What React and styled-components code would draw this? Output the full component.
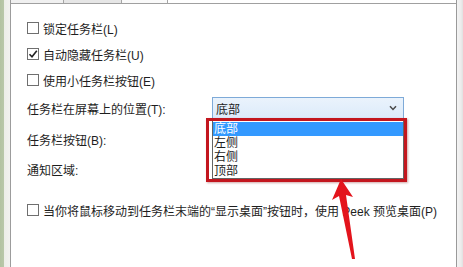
import React from 'react'
import styled, { createGlobalStyle } from 'styled-components'

const GlobalStyle = createGlobalStyle`
  html, body {
    margin: 0;
    padding: 0;
    background: #f0f0f0;
  }
  body {
    width: 463px;
    height: 267px;
    overflow: hidden;
    font-family: "Liberation Sans", "Noto Sans CJK SC", sans-serif;
    font-size: 12px;
    color: #1e1e1e;
  }
`

const Page = styled.div`
  position: relative;
  display: flex;
  width: 463px;
  height: 267px;
`

const LeftStrip = styled.div`
  width: 10px;
  background: linear-gradient(to right, #b3c3a2 0, #b9c8aa 4px, #eceee8 4px, #f2f2f0 10px);
  border-right: 1px solid #9c9c9c;
`

const Main = styled.div`
  flex: 1;
  display: flex;
  flex-direction: column;
`

const TabStrip = styled.div`
  display: flex;
  height: 3px;
  background: #f0f0f0;
  border-bottom: 1px solid #a0a0a0;
`

const Tab = styled.div`
  width: ${p => p.$w}px;
  flex: ${p => (p.$grow ? 1 : 'none')};
  border-right: ${p => (p.$edge ? '1px solid #a6a6a6' : 'none')};
  background: ${p => p.$bg || 'transparent'};
`

const Panel = styled.div`
  flex: 1;
  background: #fff;
  padding: 11px 0 0 16px;
`

const RightStrip = styled.div`
  width: 6px;
  border-left: 1px solid #9a9a9a;
  background: linear-gradient(to right, #f4f4f4 0, #ececec 4px, #e0e0e0 6px);
`

const Row = styled.div`
  display: flex;
  align-items: center;
  height: ${p => p.$h}px;
  white-space: nowrap;
`

const Box = styled.span`
  position: relative;
  width: 10px;
  height: 10px;
  border: 1px solid #6f6f6f;
  background: #fff;
  margin-right: 4px;
  flex: none;
`

const Label = styled.span`
  width: ${p => (p.$w ? `${p.$w}px` : 'auto')};
  flex: none;
`

const SelectWrap = styled.div`
  position: relative;
  width: 192px;
`

const Select = styled.div`
  display: flex;
  align-items: center;
  justify-content: space-between;
  height: 20px;
  padding: 0 6px 0 3px;
  border: 1px solid #7eaad8;
  background: linear-gradient(to bottom, #eaf3fc, #dceafa);
`

const List = styled.div`
  position: absolute;
  left: 0;
  top: 22px;
  width: 190px;
  padding: 2px 0 0;
  border: 1px solid #646464;
  background: #fff;
`

const Item = styled.div`
  height: 14px;
  line-height: 14px;
  padding-left: 1px;
  background: ${p => (p.$active ? '#3399ff' : 'transparent')};
  color: ${p => (p.$active ? '#fff' : '#1e1e1e')};
`

const Highlight = styled.div`
  position: absolute;
  left: -6px;
  top: 21px;
  width: 195px;
  height: 58px;
  border: 3px solid #c3161e;
  box-shadow: 1px 1px 2px rgba(120, 0, 0, 0.35);
`

const Arrow = styled.svg`
  position: absolute;
  left: 0;
  top: 0;
  pointer-events: none;
`

const Check = () => (
  <svg width="10" height="10" viewBox="0 0 10 10" style={{ display: 'block' }}>
    <path d="M1.5 5.2 L4 7.8 L8.8 1.8" fill="none" stroke="#222" strokeWidth="1.6" />
  </svg>
)

const Chevron = () => (
  <svg width="8" height="6" viewBox="0 0 8 6">
    <path d="M1 1.2 L4 4.4 L7 1.2" fill="none" stroke="#4a4a4a" strokeWidth="1.5" />
  </svg>
)

const options = ['底部', '左侧', '右侧', '顶部']

export default function App() {
  return (
    <Page>
      <GlobalStyle />
      <LeftStrip />
      <Main>
        <TabStrip>
          <Tab $w={52} $edge />
          <Tab $w={57} $edge $bg="#e6e6e6" />
          <Tab $w={45} $edge $bg="#fafafa" />
          <Tab $grow $bg="#fff" />
        </TabStrip>
        <Panel>
          <Row $h={26}>
            <Box />
            <Label>锁定任务栏(L)</Label>
          </Row>
          <Row $h={26}>
            <Box>
              <Check />
            </Box>
            <Label>自动隐藏任务栏(U)</Label>
          </Row>
          <Row $h={26}>
            <Box />
            <Label>使用小任务栏按钮(E)</Label>
          </Row>
          <Row $h={30}>
            <Label $w={185}>任务栏在屏幕上的位置(T):</Label>
            <SelectWrap>
              <Select>
                <span>底部</span>
                <Chevron />
              </Select>
              <List>
                {options.map((o, i) => (
                  <Item key={o} $active={i === 0}>
                    {o}
                  </Item>
                ))}
              </List>
              <Highlight />
            </SelectWrap>
          </Row>
          <Row $h={33}>
            <Label>任务栏按钮(B):</Label>
          </Row>
          <Row $h={27}>
            <Label>通知区域:</Label>
          </Row>
          <Row $h={54}>
            <Box />
            <Label>当你将鼠标移动到任务栏末端的“显示桌面”按钮时，使用 Peek 预览桌面(P)</Label>
          </Row>
        </Panel>
      </Main>
      <RightStrip />
      <Arrow width="463" height="267" viewBox="0 0 463 267">
        <polygon
          points="341,179 332,200 339,196 352,259 355,259 346,195 353,197"
          fill="#e3141c"
        />
      </Arrow>
    </Page>
  )
}
